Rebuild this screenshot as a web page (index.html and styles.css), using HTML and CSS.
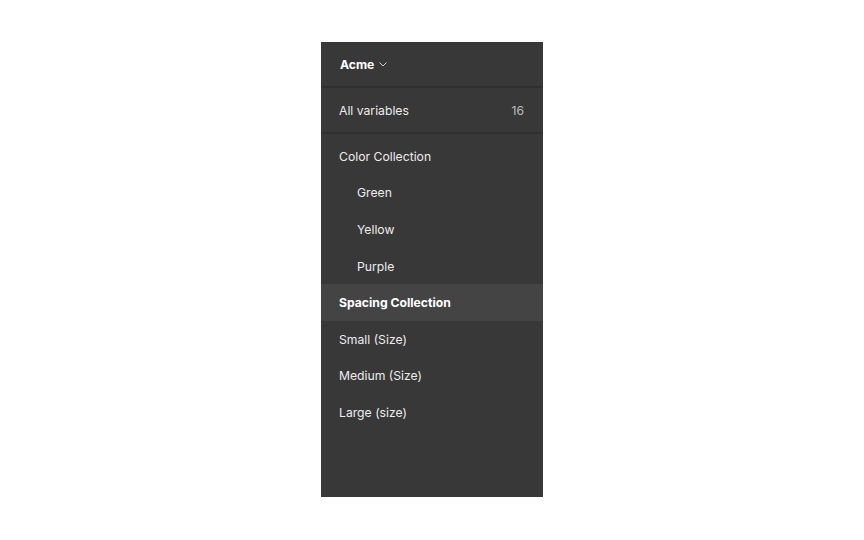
FILE: index.html
```html
<!DOCTYPE html>
<html lang="en">
<head>
<meta charset="utf-8">
<title>Variables</title>
<link rel="stylesheet" href="styles.css">
</head>
<body>
<div class="stage">
  <nav class="panel">
    <div class="header">
      <span class="title">Acme</span>
      <svg class="chev" width="8" height="5" viewBox="0 0 8 5"><path d="M0.5 0.5 L4 4 L7.5 0.5" fill="none" stroke="#d0d0d0" stroke-width="1"/></svg>
    </div>
    <div class="all">
      <span>All variables</span>
      <span class="count">16</span>
    </div>
    <ul class="list">
      <li class="item">Color Collection</li>
      <li class="item sub">Green</li>
      <li class="item sub">Yellow</li>
      <li class="item sub">Purple</li>
      <li class="item active">Spacing Collection</li>
      <li class="item">Small (Size)</li>
      <li class="item">Medium (Size)</li>
      <li class="item">Large (size)</li>
    </ul>
  </nav>
</div>
</body>
</html>
```

FILE: styles.css
```css
html, body {
  margin: 0;
  padding: 0;
  background: #ffffff;
}
.stage {
  width: 864px;
  height: 540px;
  display: flex;
  align-items: flex-start;
  justify-content: center;
  padding-top: 42px;
  box-sizing: border-box;
}
.panel {
  width: 222px;
  height: 455px;
  background: #383838;
  font-family: Inter, "Noto Sans", sans-serif;
  font-size: 12.2px;
  color: #ededed;
  display: flex;
  flex-direction: column;
}
.header {
  height: 44px;
  border-bottom: 2px solid #2f2f2f;
  display: flex;
  align-items: center;
  gap: 5px;
  padding-left: 19px;
}
.title {
  font-weight: 700;
  color: #ffffff;
}
.chev {
  margin-top: 1px;
}
.all {
  height: 44px;
  border-bottom: 2px solid #2f2f2f;
  display: flex;
  align-items: center;
  justify-content: space-between;
  padding: 0 19px 0 18px;
}
.count {
  color: #bdbdbd;
}
.list {
  list-style: none;
  margin: 0;
  padding: 4px 0 0 0;
}
.item {
  height: 36.6px;
  display: flex;
  align-items: center;
  padding-left: 18px;
}
.item.sub {
  padding-left: 36px;
}
.item.active {
  background: #444444;
  font-weight: 700;
  color: #ffffff;
}
```
